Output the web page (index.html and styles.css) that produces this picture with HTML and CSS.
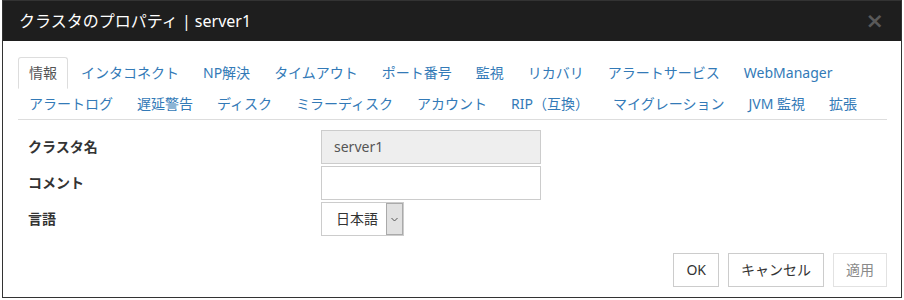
FILE: index.html
```html
<!DOCTYPE html>
<html lang="ja">
<head>
<meta charset="utf-8">
<title>クラスタのプロパティ</title>
<link rel="stylesheet" href="styles.css">
</head>
<body>
<div class="dialog">
  <div class="header">
    <span class="title">クラスタのプロパティ | server1</span>
    <span class="close">×</span>
  </div>
  <div class="body">
    <ul class="tabs">
      <li class="active"><a>情報</a></li>
      <li><a>インタコネクト</a></li>
      <li><a>NP解決</a></li>
      <li><a>タイムアウト</a></li>
      <li><a>ポート番号</a></li>
      <li><a>監視</a></li>
      <li><a>リカバリ</a></li>
      <li><a>アラートサービス</a></li>
      <li><a>WebManager</a></li>
      <li class="break"></li>
      <li><a>アラートログ</a></li>
      <li><a>遅延警告</a></li>
      <li><a>ディスク</a></li>
      <li><a>ミラーディスク</a></li>
      <li><a>アカウント</a></li>
      <li><a>RIP（互換）</a></li>
      <li><a>マイグレーション</a></li>
      <li><a>JVM 監視</a></li>
      <li><a>拡張</a></li>
    </ul>
    <div class="form">
      <div class="row">
        <label class="label">クラスタ名</label>
        <div class="input readonly">server1</div>
      </div>
      <div class="row">
        <label class="label">コメント</label>
        <div class="input"></div>
      </div>
      <div class="row">
        <label class="label">言語</label>
        <div class="select">
          <span class="select-text">日本語</span>
          <span class="select-arrow"><svg width="7" height="5" viewBox="0 0 7 5"><polyline points="0.5,1 3.5,4 6.5,1" fill="none" stroke="#555" stroke-width="1"/></svg></span>
        </div>
      </div>
    </div>
    <div class="footer">
      <button class="btn">OK</button>
      <button class="btn">キャンセル</button>
      <button class="btn disabled">適用</button>
    </div>
  </div>
</div>
</body>
</html>
```
FILE: styles.css
```css
* { box-sizing: border-box; }
html, body { margin: 0; padding: 0; background: #fff; }
body {
  font-family: "Noto Sans", "Noto Sans CJK JP", sans-serif;
  font-size: 14px;
  color: #333;
}
.dialog {
  margin-left: 2px;
  width: 900px;
  height: 298px;
  border: 1px solid #333;
  border-top: none;
  display: flex;
  flex-direction: column;
  background: #fff;
}
.header {
  height: 41px;
  background: #1e1e1e;
  border-top: 1px solid #333;
  display: flex;
  align-items: center;
  justify-content: space-between;
  padding: 0 17px 0 16px;
}
.title {
  color: #fff;
  font-size: 16px;
  line-height: 22px;
}
.close {
  color: #595959;
  font-size: 22px;
  font-weight: bold;
  line-height: 22px;
  font-family: "DejaVu Sans", sans-serif;
}
.body {
  flex: 1;
  display: flex;
  flex-direction: column;
  padding: 16px 14px 10px 15px;
}
.tabs {
  list-style: none;
  margin: 0;
  padding: 0;
  display: flex;
  flex-wrap: wrap;
  border-bottom: 1px solid #ddd;
}
.tabs li { margin-bottom: -1px; }
.tabs li.break { flex-basis: 100%; height: 0; margin: 0; }
.tabs a {
  display: block;
  padding: 5px 10px;
  line-height: 20px;
  border: 1px solid transparent;
  border-radius: 3px 3px 0 0;
  margin-right: 2px;
  color: #337ab7;
  cursor: pointer;
}
.tabs li.active a {
  color: #555;
  border-color: #ddd #ddd transparent;
  background: #fff;
}
.form {
  margin-top: 10px;
  padding-left: 10px;
  display: flex;
  flex-direction: column;
  gap: 2px;
}
.row {
  display: flex;
  align-items: center;
  height: 34px;
}
.label {
  width: 293px;
  font-weight: bold;
  line-height: 20px;
}
.input {
  width: 220px;
  height: 34px;
  border: 1px solid #ccc;
  padding: 0 12px;
  line-height: 32px;
  color: #555;
}
.input.readonly { background: #eee; }
.select {
  display: flex;
  align-items: stretch;
  height: 34px;
  border: 1px solid #ccc;
  padding-left: 14px;
  color: #333;
}
.select-text { line-height: 32px; margin-right: 8px; }
.select-arrow {
  width: 17px;
  border: 1px solid #aaa;
  background: #e1e1e1;
  display: flex;
  align-items: center;
  justify-content: center;
}
.footer {
  margin-top: auto;
  display: flex;
  justify-content: flex-end;
  gap: 9px;
}
.btn {
  font-family: inherit;
  font-size: 14px;
  height: 34px;
  padding: 0 12px;
  border: 1px solid #ccc;
  background: #fff;
  color: #333;
  border-radius: 0;
  line-height: 20px;
}
.btn.disabled {
  color: #8a8a8a;
  border-color: #e2e2e2;
}
```
